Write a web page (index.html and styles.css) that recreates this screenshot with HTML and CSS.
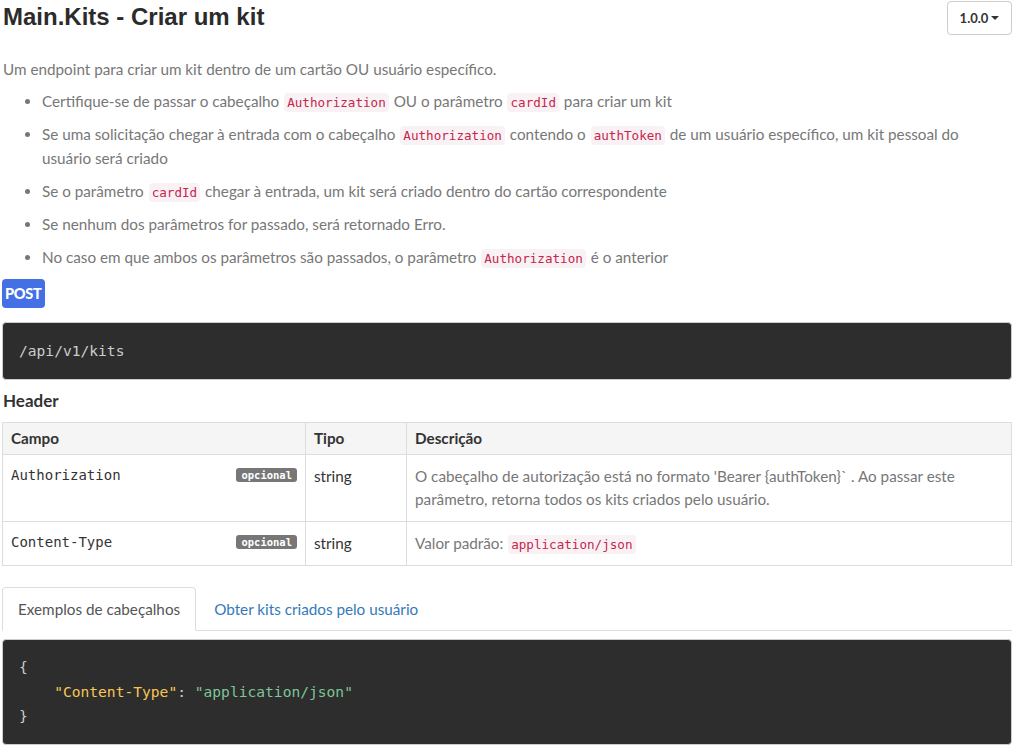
FILE: index.html
```html
<!DOCTYPE html>
<html lang="pt">
<head>
<meta charset="utf-8">
<title>Main.Kits - Criar um kit</title>
<link rel="stylesheet" href="styles.css">
</head>
<body>
<div class="page">
  <div class="title-row">
    <h1 class="title">Main.Kits - Criar um kit</h1>
    <button class="version">1.0.0 <span class="caret"></span></button>
  </div>

  <p class="desc">Um endpoint para criar um kit dentro de um cartão OU usuário específico.</p>
  <ul class="notes">
    <li>Certifique-se de passar o cabeçalho <code class="ic">Authorization</code> OU o parâmetro <code class="ic">cardId</code> para criar um kit</li>
    <li><span>Se uma solicitação chegar à entrada com o cabeçalho</span> <code class="ic">Authorization</code> <span>contendo o</span> <code class="ic">authToken</code> <span>de um usuário específico, um kit pessoal do</span> <span>usuário será criado</span></li>
    <li>Se o parâmetro <code class="ic">cardId</code> chegar à entrada, um kit será criado dentro do cartão correspondente</li>
    <li>Se nenhum dos parâmetros for passado, será retornado Erro.</li>
    <li>No caso em que ambos os parâmetros são passados, o parâmetro <code class="ic">Authorization</code> é o anterior</li>
  </ul>

  <div class="method-row"><span class="method">POST</span></div>
  <pre class="endpoint">/api/v1/kits</pre>

  <h2 class="section">Header</h2>
  <table class="params">
    <thead>
      <tr>
        <th class="c-field">Campo</th>
        <th class="c-type">Tipo</th>
        <th class="c-desc">Descrição</th>
      </tr>
    </thead>
    <tbody>
      <tr>
        <td class="c-field"><span class="badge">opcional</span><span class="fname">Authorization</span></td>
        <td class="c-type">string</td>
        <td class="c-desc">O cabeçalho de autorização está no formato 'Bearer {authToken}` . Ao passar este parâmetro, retorna todos os kits criados pelo usuário.</td>
      </tr>
      <tr>
        <td class="c-field"><span class="badge">opcional</span><span class="fname">Content-Type</span></td>
        <td class="c-type">string</td>
        <td class="c-desc">Valor padrão: <code class="ic">application/json</code></td>
      </tr>
    </tbody>
  </table>

  <ul class="tabs">
    <li class="tab active"><a>Exemplos de cabeçalhos</a></li>
    <li class="tab"><a>Obter kits criados pelo usuário</a></li>
  </ul>
  <pre class="code"><span class="p">{</span>
    <span class="k">"Content-Type"</span><span class="p">:</span> <span class="s">"application/json"</span>
<span class="p">}</span></pre>
</div>
</body>
</html>
```

FILE: styles.css
```css
html, body {
  margin: 0;
  padding: 0;
  background: #fff;
}

body {
  font-family: "Lato", "Open Sans", sans-serif;
  font-size: 15.25px;
  color: #777;
}

.page {
  padding: 0 11px 0 2px;
}

.title-row {
  display: flex;
  justify-content: space-between;
  align-items: flex-start;
}

.title {
  margin: 0;
  padding: 2px 0 0 1px;
  font-family: "Liberation Sans", Arial, sans-serif;
  font-size: 24px;
  line-height: 30px;
  font-weight: bold;
  color: #2b2b2b;
}

.version {
  margin-top: 1px;
  width: 65px;
  height: 34px;
  border: 1px solid #ccc;
  border-radius: 4px;
  background: #fff;
  font-family: "Lato", sans-serif;
  font-size: 13px;
  font-weight: bold;
  color: #333;
  display: flex;
  align-items: center;
  justify-content: center;
  gap: 3px;
  padding: 0;
}

.caret {
  display: inline-block;
  width: 0;
  height: 0;
  border-left: 4px solid transparent;
  border-right: 4px solid transparent;
  border-top: 4px solid #333;
}

.desc {
  margin: 23px 0 0 1px;
  line-height: 22px;
}

.notes {
  margin: 9px 0 0;
  padding: 0 30px 0 40px;
}

.notes li {
  line-height: 24px;
  margin-bottom: 9px;
}

.notes li:last-child {
  margin-bottom: 0;
}

.ic {
  font-family: "DejaVu Sans Mono", "Liberation Mono", monospace;
  font-size: 12.6px;
  line-height: 14px;
  color: #c7254e;
  background: #f9f2f4;
  border-radius: 4px;
  padding: 2px 3px;
  margin: 0 1px;
}

.method-row {
  margin-top: 10px;
  display: flex;
}

.method {
  display: inline-block;
  background: #4470e6;
  color: #fff;
  font-weight: 900;
  font-size: 14.5px;
  letter-spacing: -0.3px;
  line-height: 29px;
  height: 29px;
  padding: 0 4px 0 3px;
  border-radius: 4px;
}

.endpoint {
  margin: 14px 0 0;
  padding: 18px 16px;
  background: #2d2d2d;
  border: 1px solid #ccc;
  border-radius: 4px;
  font-family: "DejaVu Sans Mono", "Liberation Mono", monospace;
  font-size: 14.6px;
  line-height: 20px;
  color: #ccc;
}

.section {
  margin: 9px 0 0 1px;
  font-size: 17px;
  line-height: 24px;
  font-weight: bold;
  color: #333;
}

.params {
  margin-top: 9px;
  width: 100%;
  border-collapse: collapse;
  border: 1px solid #ddd;
}

.params th, .params td {
  border: 1px solid #ddd;
  text-align: left;
  vertical-align: top;
}

.params th {
  background: #f5f5f5;
  color: #333;
  font-weight: bold;
  padding: 5px 8px;
  line-height: 21px;
}

.params td {
  padding: 10px 8px;
  line-height: 23px;
}

.c-field { width: 286px; }
.c-type { width: 84px; }

td.c-type {
  color: #333;
}

.fname {
  display: block;
  font-family: "DejaVu Sans Mono", "Liberation Mono", monospace;
  font-size: 14px;
  color: #333;
  line-height: 20px;
}

.badge {
  float: right;
  margin-top: 3px;
  background: #777;
  color: #fff;
  font-family: "DejaVu Sans Mono", monospace;
  font-weight: bold;
  font-size: 10.5px;
  line-height: 14px;
  padding: 0 5px;
  border-radius: 3px;
}

.tabs {
  list-style: none;
  margin: 21px 0 0;
  padding: 0;
  display: flex;
  border-bottom: 1px solid #ddd;
}

.tab {
  margin-right: 2px;
  margin-bottom: -1px;
}

.tab a {
  display: block;
  padding: 10px 15px;
  line-height: 22px;
  border: 1px solid transparent;
  border-radius: 4px 4px 0 0;
  color: #337ab7;
}

.tab.active a {
  color: #555;
  background: #fff;
  border-color: #ddd #ddd transparent;
}

.code {
  margin: 8px 0 0;
  padding: 15px 16px;
  background: #2d2d2d;
  border: 1px solid #ccc;
  border-radius: 4px;
  font-family: "DejaVu Sans Mono", "Liberation Mono", monospace;
  font-size: 14.6px;
  line-height: 24.5px;
  color: #ccc;
}

.code .k { color: #f8c555; }
.code .s { color: #7ec699; }
.code .p { color: #ccc; }
```
